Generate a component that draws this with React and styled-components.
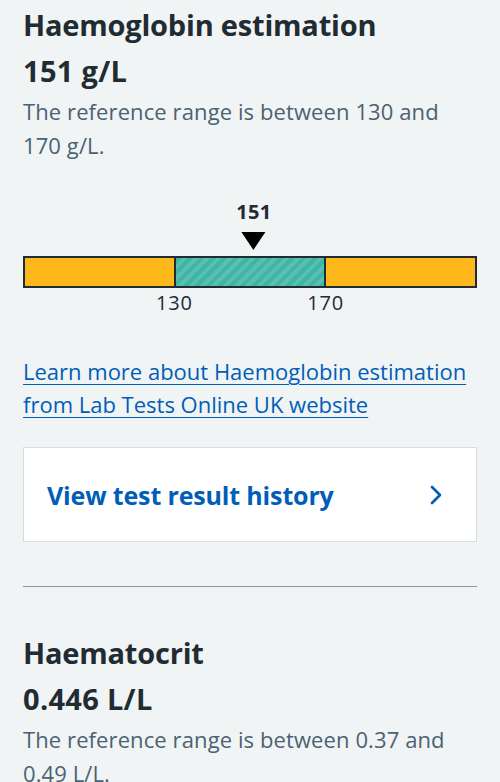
import React from "react";
import styled, { createGlobalStyle } from "styled-components";

const GlobalStyle = createGlobalStyle`
  body {
    margin: 0;
    background: #f0f4f5;
    font-family: "Open Sans", "Noto Sans", sans-serif;
    color: #212b32;
  }
`;

const results = [
  {
    name: "Haemoglobin estimation",
    value: "151 g/L",
    range: "The reference range is between 130 and 170 g/L.",
    chart: { value: 151, low: 130, high: 170, min: 90, max: 210 },
    link: "Learn more about Haemoglobin estimation from Lab Tests Online UK website",
  },
  {
    name: "Haematocrit",
    value: "0.446 L/L",
    range: "The reference range is between 0.37 and 0.49 L/L.",
  },
];

const RangeChart = ({ value, low, high, min, max }) => {
  const pos = (v) => `${((v - min) / (max - min)) * 100}%`;
  return (
    <Chart>
      <MarkerRow>
        <Marker style={{ left: pos(value) }}>
          <MarkerLabel>{value}</MarkerLabel>
          <Triangle />
        </Marker>
      </MarkerRow>
      <Bar>
        <Segment />
        <Segment normal />
        <Segment />
      </Bar>
      <TickRow>
        <Tick style={{ left: pos(low) }}>{low}</Tick>
        <Tick style={{ left: pos(high) }}>{high}</Tick>
      </TickRow>
    </Chart>
  );
};

const App = () => {
  return (
    <Page>
      <GlobalStyle />
      {results.map((r, i) => (
        <Result key={r.name} first={i === 0}>
          <Title>{r.name}</Title>
          <Value>{r.value}</Value>
          <RangeText>{r.range}</RangeText>
          {r.chart ? <RangeChart {...r.chart} /> : null}
          {r.link ? <MoreLink href="#">{r.link}</MoreLink> : null}
          {r.link ? (
            <HistoryCard href="#">
              <span>View test result history</span>
              <svg width="12" height="20" viewBox="0 0 12 20">
                <polyline
                  points="2,2 10,10 2,18"
                  fill="none"
                  stroke="#005eb8"
                  strokeWidth="2.6"
                  strokeLinecap="round"
                  strokeLinejoin="round"
                />
              </svg>
            </HistoryCard>
          ) : null}
        </Result>
      ))}
    </Page>
  );
};

export default App;

const Page = styled.div`
  padding: 0 23px;
  height: 782px;
  overflow: hidden;
`;

const Result = styled.section`
  padding-top: ${(p) => (p.first ? "4px" : "45px")};
  padding-bottom: 44px;
  border-bottom: 1px solid #8a979f;
`;

const Title = styled.h2`
  margin: 0;
  font-size: 29px;
  line-height: 42px;
  font-weight: 700;
  letter-spacing: -0.2px;
`;

const Value = styled.div`
  margin-top: 4px;
  font-size: 29px;
  line-height: 42px;
  font-weight: 700;
  letter-spacing: 0.3px;
`;

const RangeText = styled.p`
  margin: 2px 0 0;
  font-size: 22px;
  line-height: 34px;
  letter-spacing: 0.1px;
  color: #4c6272;
`;

const Chart = styled.div`
  margin-top: 32px;
`;

const MarkerRow = styled.div`
  position: relative;
  height: 62px;
`;

const Marker = styled.div`
  position: absolute;
  bottom: 6px;
  transform: translateX(-50%);
  display: flex;
  flex-direction: column;
  align-items: center;
  gap: 8px;
`;

const MarkerLabel = styled.span`
  font-size: 20px;
  font-weight: 700;
  line-height: 24px;
  letter-spacing: 0.3px;
`;

const Triangle = styled.span`
  width: 0;
  height: 0;
  border-left: 12px solid transparent;
  border-right: 12px solid transparent;
  border-top: 18px solid #000;
`;

const Bar = styled.div`
  display: flex;
  height: 32px;
  border: 2px solid #212b32;
  box-sizing: border-box;
`;

const Segment = styled.div`
  flex: 1;
  background: ${(p) =>
    p.normal
      ? "repeating-linear-gradient(-45deg, #40b4a5 0 4px, #58c0b2 4px 8px)"
      : "#ffb81c"};
  & + & {
    border-left: 2px solid #212b32;
  }
`;

const TickRow = styled.div`
  position: relative;
  height: 30px;
`;

const Tick = styled.span`
  position: absolute;
  top: 3px;
  transform: translateX(-50%);
  font-size: 20px;
  line-height: 24px;
  letter-spacing: 0.8px;
`;

const MoreLink = styled.a`
  display: block;
  margin-top: 37px;
  font-size: 22px;
  line-height: 33px;
  color: #005eb8;
  text-decoration: underline;
  text-underline-offset: 4px;
  text-decoration-thickness: 1px;
`;

const HistoryCard = styled.a`
  display: flex;
  align-items: center;
  justify-content: space-between;
  margin-top: 26px;
  height: 95px;
  box-sizing: border-box;
  padding: 0 34px 0 23px;
  background: #fff;
  border: 1px solid #d8dde0;
  color: #005eb8;
  font-size: 25px;
  font-weight: 700;
  letter-spacing: -0.15px;
  text-decoration: none;
`;
